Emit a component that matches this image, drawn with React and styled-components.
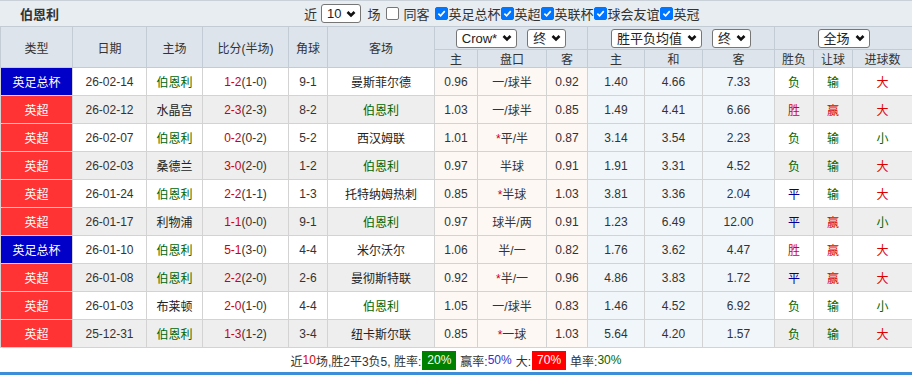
import React from 'react';
import styled, { createGlobalStyle } from 'styled-components';

const GlobalStyle = createGlobalStyle`
  html, body {
    margin: 0;
    padding: 0;
    background: #fff;
  }
  body {
    font-family: 'Liberation Sans', 'Noto Sans CJK SC', sans-serif;
    font-size: 12px;
    color: #333;
  }
`;

const Wrap = styled.div`
  width: 912px;
  border-bottom: 3px solid #3d8ed8;
  box-sizing: border-box;
`;

const TitleBar = styled.div`
  display: flex;
  align-items: center;
  height: 26px;
  background: #e8edf2;
  border-top: 1px solid #c9d0d8;
  box-sizing: border-box;
`;

const TeamName = styled.div`
  width: 284px;
  padding-left: 20px;
  font-size: 13px;
  font-weight: bold;
  color: #333;
`;

const Filters = styled.div`
  display: flex;
  align-items: center;
  font-size: 13px;
  color: #333;
  white-space: nowrap;
`;

const FilterText = styled.span`
  margin: ${({ $m }) => $m || '0'};
`;

const SelectBox = styled.span`
  display: inline-flex;
  flex-shrink: 0;
  align-items: center;
  justify-content: space-between;
  gap: 5px;
  height: 19px;
  padding: 0 4px 0 5px;
  border: 1px solid #767676;
  border-radius: 3px;
  background: #fff;
  box-sizing: border-box;
  font-size: 13px;
  line-height: 1;
  white-space: nowrap;
  color: #222;
  vertical-align: middle;
`;

const Box = styled.span`
  display: inline-flex;
  align-items: center;
  justify-content: center;
  width: 13px;
  height: 13px;
  border-radius: 2px;
  box-sizing: border-box;
  margin: ${({ $m }) => $m || '0 1px 0 0'};
  background: ${({ $on }) => ($on ? '#0075ff' : '#fff')};
  border: 1px solid ${({ $on }) => ($on ? '#0075ff' : '#767676')};
`;

const Chevron = () => (
  <svg width="10" height="8" viewBox="0 0 10 8">
    <polyline points="1.5,2 5,5.5 8.5,2" fill="none" stroke="#111" strokeWidth="2.6" />
  </svg>
);

const Select = ({ children }) => (
  <SelectBox>
    <span>{children}</span>
    <Chevron />
  </SelectBox>
);

const Check = ({ on, m }) => (
  <Box $on={on} $m={m}>
    {on && (
      <svg width="9" height="9" viewBox="0 0 10 10">
        <polyline points="1.5,5.2 4,7.6 8.6,2.4" fill="none" stroke="#fff" strokeWidth="1.8" />
      </svg>
    )}
  </Box>
);

const Table = styled.table`
  width: 912px;
  border-collapse: collapse;
  table-layout: fixed;
`;

const Th = styled.th`
  background: #dde4ec;
  border: 1px solid #c3cbd4;
  font-weight: normal;
  font-size: 12px;
  color: #333;
  height: ${({ $h }) => $h || 21}px;
  padding: 0;
  text-align: center;
  white-space: nowrap;
`;

const SelectGroup = styled.div`
  display: flex;
  justify-content: center;
  gap: ${({ $gap }) => $gap || 10}px;
`;

const Row = styled.tr`
  background: ${({ $alt }) => ($alt ? '#eeeeee' : '#fff')};
`;

const Td = styled.td`
  height: 27px;
  padding: 0;
  text-align: center;
  font-size: 12px;
  white-space: nowrap;
  color: ${({ $c }) => $c || '#333'};
  border: 1px solid #d3d3d3;
  background: ${({ $bg }) => $bg || 'transparent'};
`;

const TypeCell = styled(Td)`
  color: #fff;
  background: ${({ $cup }) => ($cup ? '#0000c8' : '#ff3333')};
`;

const Red = styled.span`
  color: #d00000;
`;

const Footer = styled.div`
  display: flex;
  align-items: center;
  justify-content: center;
  height: 24px;
  font-size: 12px;
  color: #333;
`;

const Badge = styled.span`
  display: inline-block;
  padding: 0 5px;
  line-height: 19px;
  color: #fff;
  background: ${({ $bg }) => $bg};
  margin: 0 4px 0 1px;
`;

const Colored = styled.span`
  color: ${({ $c }) => $c};
  margin-right: ${({ $mr }) => $mr || 0}px;
`;

const GREEN = '#006600';
const RED = '#dd0000';
const BLUE = '#000099';
const ODDS1 = '#fdf8f4';
const ODDS2 = '#f1f6fb';

const widths = [72, 74, 56, 86, 39, 107, 43, 69, 41, 57, 58, 72, 39, 39, 60];

const rows = [
  ['英足总杯', '26-02-14', '伯恩利', '1-2', '(1-0)', '9-1', '曼斯菲尔德', '0.96', '一/球半', '0.92', '1.40', '4.66', '7.33', '负', '输', '大'],
  ['英超', '26-02-12', '水晶宫', '2-3', '(2-3)', '8-2', '伯恩利', '1.03', '一/球半', '0.85', '1.49', '4.41', '6.66', '胜', '赢', '大'],
  ['英超', '26-02-07', '伯恩利', '0-2', '(0-2)', '5-2', '西汉姆联', '1.01', '*平/半', '0.87', '3.14', '3.54', '2.23', '负', '输', '小'],
  ['英超', '26-02-03', '桑德兰', '3-0', '(2-0)', '1-2', '伯恩利', '0.97', '半球', '0.91', '1.91', '3.31', '4.52', '负', '输', '大'],
  ['英超', '26-01-24', '伯恩利', '2-2', '(1-1)', '1-3', '托特纳姆热刺', '0.85', '*半球', '1.03', '3.81', '3.36', '2.04', '平', '输', '大'],
  ['英超', '26-01-17', '利物浦', '1-1', '(0-0)', '9-1', '伯恩利', '0.97', '球半/两', '0.91', '1.23', '6.49', '12.00', '平', '赢', '小'],
  ['英足总杯', '26-01-10', '伯恩利', '5-1', '(3-0)', '4-4', '米尔沃尔', '1.06', '半/一', '0.82', '1.76', '3.62', '4.47', '胜', '赢', '大'],
  ['英超', '26-01-08', '伯恩利', '2-2', '(2-0)', '2-6', '曼彻斯特联', '0.92', '*半/一', '0.96', '4.86', '3.83', '1.72', '平', '赢', '大'],
  ['英超', '26-01-03', '布莱顿', '2-0', '(1-0)', '4-4', '伯恩利', '1.05', '一/球半', '0.83', '1.46', '4.52', '6.92', '负', '输', '小'],
  ['英超', '25-12-31', '伯恩利', '1-3', '(1-2)', '3-4', '纽卡斯尔联', '0.85', '*一球', '1.03', '5.64', '4.20', '1.57', '负', '输', '大'],
];

const resultColor = r => (r === '胜' ? RED : r === '平' ? BLUE : GREEN);
const handicapColor = r => (r === '赢' ? RED : GREEN);
const goalColor = r => (r === '大' ? RED : GREEN);
const teamColor = t => (t === '伯恩利' ? GREEN : '#222');

const Line = ({ text }) =>
  text.startsWith('*') ? (
    <>
      <Red>*</Red>
      {text.slice(1)}
    </>
  ) : (
    text
  );

export default function App() {
  return (
    <Wrap>
      <GlobalStyle />
      <TitleBar>
        <TeamName>伯恩利</TeamName>
        <Filters>
          <FilterText $m="0 4px 0 0">近</FilterText>
          <Select>10</Select>
          <FilterText $m="0 5px 0 6px">场</FilterText>
          <Check on={false} m="0 4px 0 0" />
          <FilterText $m="0 5px 0 1px">同客</FilterText>
          <Check on />
          <FilterText>英足总杯</FilterText>
          <Check on />
          <FilterText>英超</FilterText>
          <Check on />
          <FilterText>英联杯</FilterText>
          <Check on />
          <FilterText>球会友谊</FilterText>
          <Check on />
          <FilterText>英冠</FilterText>
        </Filters>
      </TitleBar>
      <Table>
        <colgroup>
          {widths.map((w, i) => (
            <col key={i} style={{ width: w }} />
          ))}
        </colgroup>
        <thead>
          <tr>
            <Th rowSpan={2}>类型</Th>
            <Th rowSpan={2}>日期</Th>
            <Th rowSpan={2}>主场</Th>
            <Th rowSpan={2}>比分(半场)</Th>
            <Th rowSpan={2}>角球</Th>
            <Th rowSpan={2}>客场</Th>
            <Th colSpan={3} $h={22}>
              <SelectGroup>
                <Select>Crow*</Select>
                <Select>终</Select>
              </SelectGroup>
            </Th>
            <Th colSpan={3} $h={22}>
              <SelectGroup>
                <Select>胜平负均值</Select>
                <Select>终</Select>
              </SelectGroup>
            </Th>
            <Th colSpan={3} $h={22}>
              <SelectGroup>
                <Select>全场</Select>
              </SelectGroup>
            </Th>
          </tr>
          <tr>
            <Th $h={17}>主</Th>
            <Th $h={17}>盘口</Th>
            <Th $h={17}>客</Th>
            <Th $h={17}>主</Th>
            <Th $h={17}>和</Th>
            <Th $h={17}>客</Th>
            <Th $h={17}>胜负</Th>
            <Th $h={17}>让球</Th>
            <Th $h={17}>进球数</Th>
          </tr>
        </thead>
        <tbody>
          {rows.map((r, i) => (
            <Row key={i} $alt={i % 2 === 1}>
              <TypeCell $cup={r[0] === '英足总杯'}>{r[0]}</TypeCell>
              <Td>{r[1]}</Td>
              <Td $c={teamColor(r[2])}>{r[2]}</Td>
              <Td>
                <Red>{r[3]}</Red>
                {r[4]}
              </Td>
              <Td>{r[5]}</Td>
              <Td $c={teamColor(r[6])}>{r[6]}</Td>
              <Td $bg={ODDS1}>{r[7]}</Td>
              <Td $bg={ODDS1}>
                <Line text={r[8]} />
              </Td>
              <Td $bg={ODDS1}>{r[9]}</Td>
              <Td $bg={ODDS2}>{r[10]}</Td>
              <Td $bg={ODDS2}>{r[11]}</Td>
              <Td $bg={ODDS2}>{r[12]}</Td>
              <Td $c={resultColor(r[13])}>{r[13]}</Td>
              <Td $c={handicapColor(r[14])}>{r[14]}</Td>
              <Td $c={goalColor(r[15])}>{r[15]}</Td>
            </Row>
          ))}
        </tbody>
      </Table>
      <Footer>
        近<Colored $c={RED}>10</Colored>场,胜2平3负5, 胜率:
        <Badge $bg="#008000">20%</Badge>
        赢率:<Colored $c="#3333cc" $mr={4}>50%</Colored>
        大:<Badge $bg="#ff0000">70%</Badge>
        单率:<Colored $c={GREEN}>30%</Colored>
      </Footer>
    </Wrap>
  );
}
